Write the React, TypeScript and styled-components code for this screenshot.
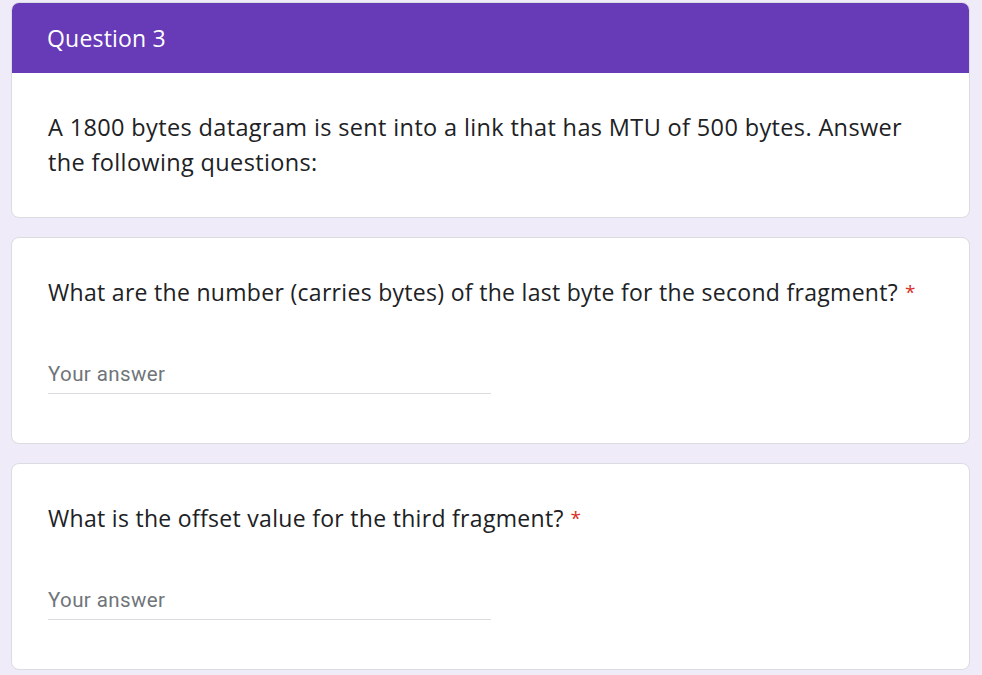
import React from "react";
import styled, { createGlobalStyle } from "styled-components";

const Global = createGlobalStyle`
  html, body { margin: 0; padding: 0; background: #f0ebf8; }
  body { font-family: "Open Sans", "Noto Sans", sans-serif; }
`;

const Page = styled.div`
  display: flex;
  flex-direction: column;
  gap: 19px;
  padding: 2px 12px 0 11px;
`;

const Card = styled.div`
  background: #fff;
  border: 1px solid #dadce0;
  border-radius: 8px;
  overflow: hidden;
`;

const Header = styled.div`
  background: #673ab7;
  height: 71px;
  display: flex;
  align-items: center;
  padding: 0 36px;
  margin: -1px -1px 0 -1px;
  color: #fff;
  font-family: "Open Sans", sans-serif;
  font-size: 23px;
  letter-spacing: 0.2px;
`;

const Description = styled.div`
  padding: 37px 36px 37px 36px;
  font-family: "Open Sans", sans-serif;
  font-weight: 500;
  font-size: 23.5px;
  letter-spacing: 0.36px;
  line-height: 35px;
  color: #202124;
`;

const QuestionBody = styled.div`
  height: 205px;
  padding: 39px 36px 0 36px;
  box-sizing: border-box;
`;

const QuestionTitle = styled.div`
  font-family: "Open Sans", sans-serif;
  font-size: 23px;
  letter-spacing: 0.3px;
  line-height: 30px;
  color: #202124;
`;

const Required = styled.span`
  color: #d93025;
  margin-left: 7px;
  font-size: 19px;
  vertical-align: 2px;
`;

const AnswerField = styled.div`
  margin-top: 55px;
  width: 443px;
  border-bottom: 1.5px solid #dadce0;
  padding-bottom: 7px;
  font-family: "Roboto", sans-serif;
  font-size: 20.5px;
  letter-spacing: 0.4px;
  color: #70757a;
`;

const questions = [
  "What are the number (carries bytes) of the last byte for the second fragment?",
  "What is the offset value for the third fragment?",
];

export default function App() {
  return (
    <>
      <Global />
      <Page>
        <Card>
          <Header>Question 3</Header>
          <Description>
            A 1800 bytes datagram is sent into a link that has MTU of 500 bytes. Answer the following questions:
          </Description>
        </Card>
        {questions.map((q) => (
          <Card key={q}>
            <QuestionBody>
              <QuestionTitle>
                {q}
                <Required>*</Required>
              </QuestionTitle>
              <AnswerField>Your answer</AnswerField>
            </QuestionBody>
          </Card>
        ))}
      </Page>
    </>
  );
}
